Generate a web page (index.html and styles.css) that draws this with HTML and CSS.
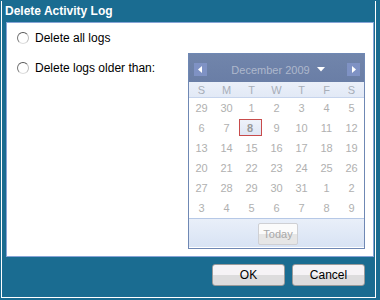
FILE: index.html
```html
<!DOCTYPE html>
<html lang="en">
<head>
    <meta charset="UTF-8">
    <title>Delete Activity Log</title>
    <link rel="stylesheet" href="styles.css">
</head>
<body>
    <div class="window">
        <div class="frame">
            <div class="title">Delete Activity Log</div>
            <div class="panel">
                <div class="options">
                    <label class="option"><span class="radio"></span>Delete all logs</label>
                    <label class="option"><span class="radio"></span>Delete logs older than:</label>
                </div>
                <div class="calendar">
                    <div class="cal-head">
                        <span class="nav prev"><svg width="5" height="7" viewBox="0 0 5 7"><path d="M4 0 L0 3.5 L4 7 Z" fill="#fff"/></svg></span>
                        <span class="month">December 2009 <svg width="8" height="5" viewBox="0 0 8 5"><path d="M0 0 H8 L4 4.5 Z" fill="#fff"/></svg></span>
                        <span class="nav next"><svg width="5" height="7" viewBox="0 0 5 7"><path d="M1 0 L5 3.5 L1 7 Z" fill="#fff"/></svg></span>
                    </div>
                    <div class="cal-days">
                        <span>S</span><span>M</span><span>T</span><span>W</span><span>T</span><span>F</span><span>S</span>
                    </div>
                    <div class="cal-grid" id="grid"></div>
                    <div class="cal-foot">
                        <span class="today">Today</span>
                    </div>
                </div>
            </div>
            <div class="actions">
                <button class="btn">OK</button>
                <button class="btn">Cancel</button>
            </div>
        </div>
    </div>
    <script>
        // December 2009 starts on a Tuesday
        const days = [29, 30];
        for (let d = 1; d <= 31; d++) days.push(d);
        for (let d = 1; days.length < 42; d++) days.push(d);
        const grid = document.getElementById("grid");
        days.forEach((d, i) => {
            const cell = document.createElement("span");
            cell.className = "cell";
            if (i === 9) cell.innerHTML = '<b class="selected">8</b>';
            else cell.innerText = d;
            grid.appendChild(cell);
        });
    </script>
</body>
</html>
```

FILE: styles.css
```css
body { margin: 0; font-family: "Liberation Sans", Arial, sans-serif; }
.window { width: 380px; height: 300px; background: #1a6c91; padding-top: 1px; box-sizing: border-box; }
.frame { margin-left: 1px; width: 375px; height: 297px; border: 1px solid #fff; border-top: none; box-sizing: border-box; }
.title { height: 21px; line-height: 20px; padding-left: 3px; color: #fff; font-weight: bold; font-size: 12px; }
.panel { display: flex; margin: 0 1px 0 4px; height: 235px; box-sizing: border-box; background: #fff; border: 1px solid #86a4d6; padding-top: 9px; }
.options { width: 171px; padding-left: 10px; }
.option { display: flex; align-items: center; height: 12px; margin-bottom: 18px; font-size: 12px; color: #000; }
.radio { width: 10px; height: 10px; border-radius: 50%; border: 1px solid; border-color: #555 #bbb #ddd #777; background: #fff; margin-right: 6px; }

.calendar { width: 177px; height: 196px; margin-top: 21px; border: 1px solid #6f88b4; box-sizing: border-box; font-size: 11px; }
.cal-head { height: 28px; background: linear-gradient(#7185ab, #6a7ea6); display: flex; align-items: center; justify-content: space-between; padding: 0 4px 0 5px; }
.nav { width: 13px; height: 13px; background: #7f92c4; display: flex; align-items: center; justify-content: center; margin-top: 3px; }
.month { color: #aeb8cc; font-size: 11px; display: flex; align-items: center; gap: 7px; margin-top: 3px; margin-left: 2px; }
.cal-days { height: 16px; display: grid; grid-template-columns: repeat(7, 25px); background: linear-gradient(#ebf0f9, #e2e9f6); border-bottom: 1px solid #c6d4ec; box-sizing: border-box; color: #a8aeb8; }
.cal-days span { text-align: center; line-height: 16px; }
.cal-grid { display: grid; grid-template-columns: repeat(7, 25px); grid-auto-rows: 20px; color: #b0b0b0; font-size: 11px; }
.cell { display: flex; align-items: center; justify-content: center; }
.selected { width: 21px; height: 15px; border: 1px solid #c84b4b; background: linear-gradient(#eef2fa, #dfe7f5); display: flex; align-items: center; justify-content: center; margin: -1px 0 0 -3px; color: #999; }
.cal-foot { height: 29px; background: linear-gradient(#e9eff9, #d8e3f4); border-top: 1px solid #b6c8e6; box-sizing: border-box; display: flex; justify-content: center; padding-top: 4px; }
.today { width: 40px; height: 22px; box-sizing: border-box; border: 1px solid #cfd0d4; border-radius: 2px; background: linear-gradient(#fbfbfb 50%, #e6e6e6 50%); color: #a8a8a8; text-align: center; line-height: 20px; margin-left: 3px; }

.actions { display: flex; justify-content: flex-end; gap: 7px; padding-right: 10px; margin-top: 7px; }
.btn { width: 73px; height: 22px; border: 1px solid #9a9a9a; border-radius: 3px; background: linear-gradient(#f6f3f6 50%, #dddcdd 50%); font-family: "Liberation Sans", Arial, sans-serif; font-size: 12px; color: #000; padding: 0; }
```
